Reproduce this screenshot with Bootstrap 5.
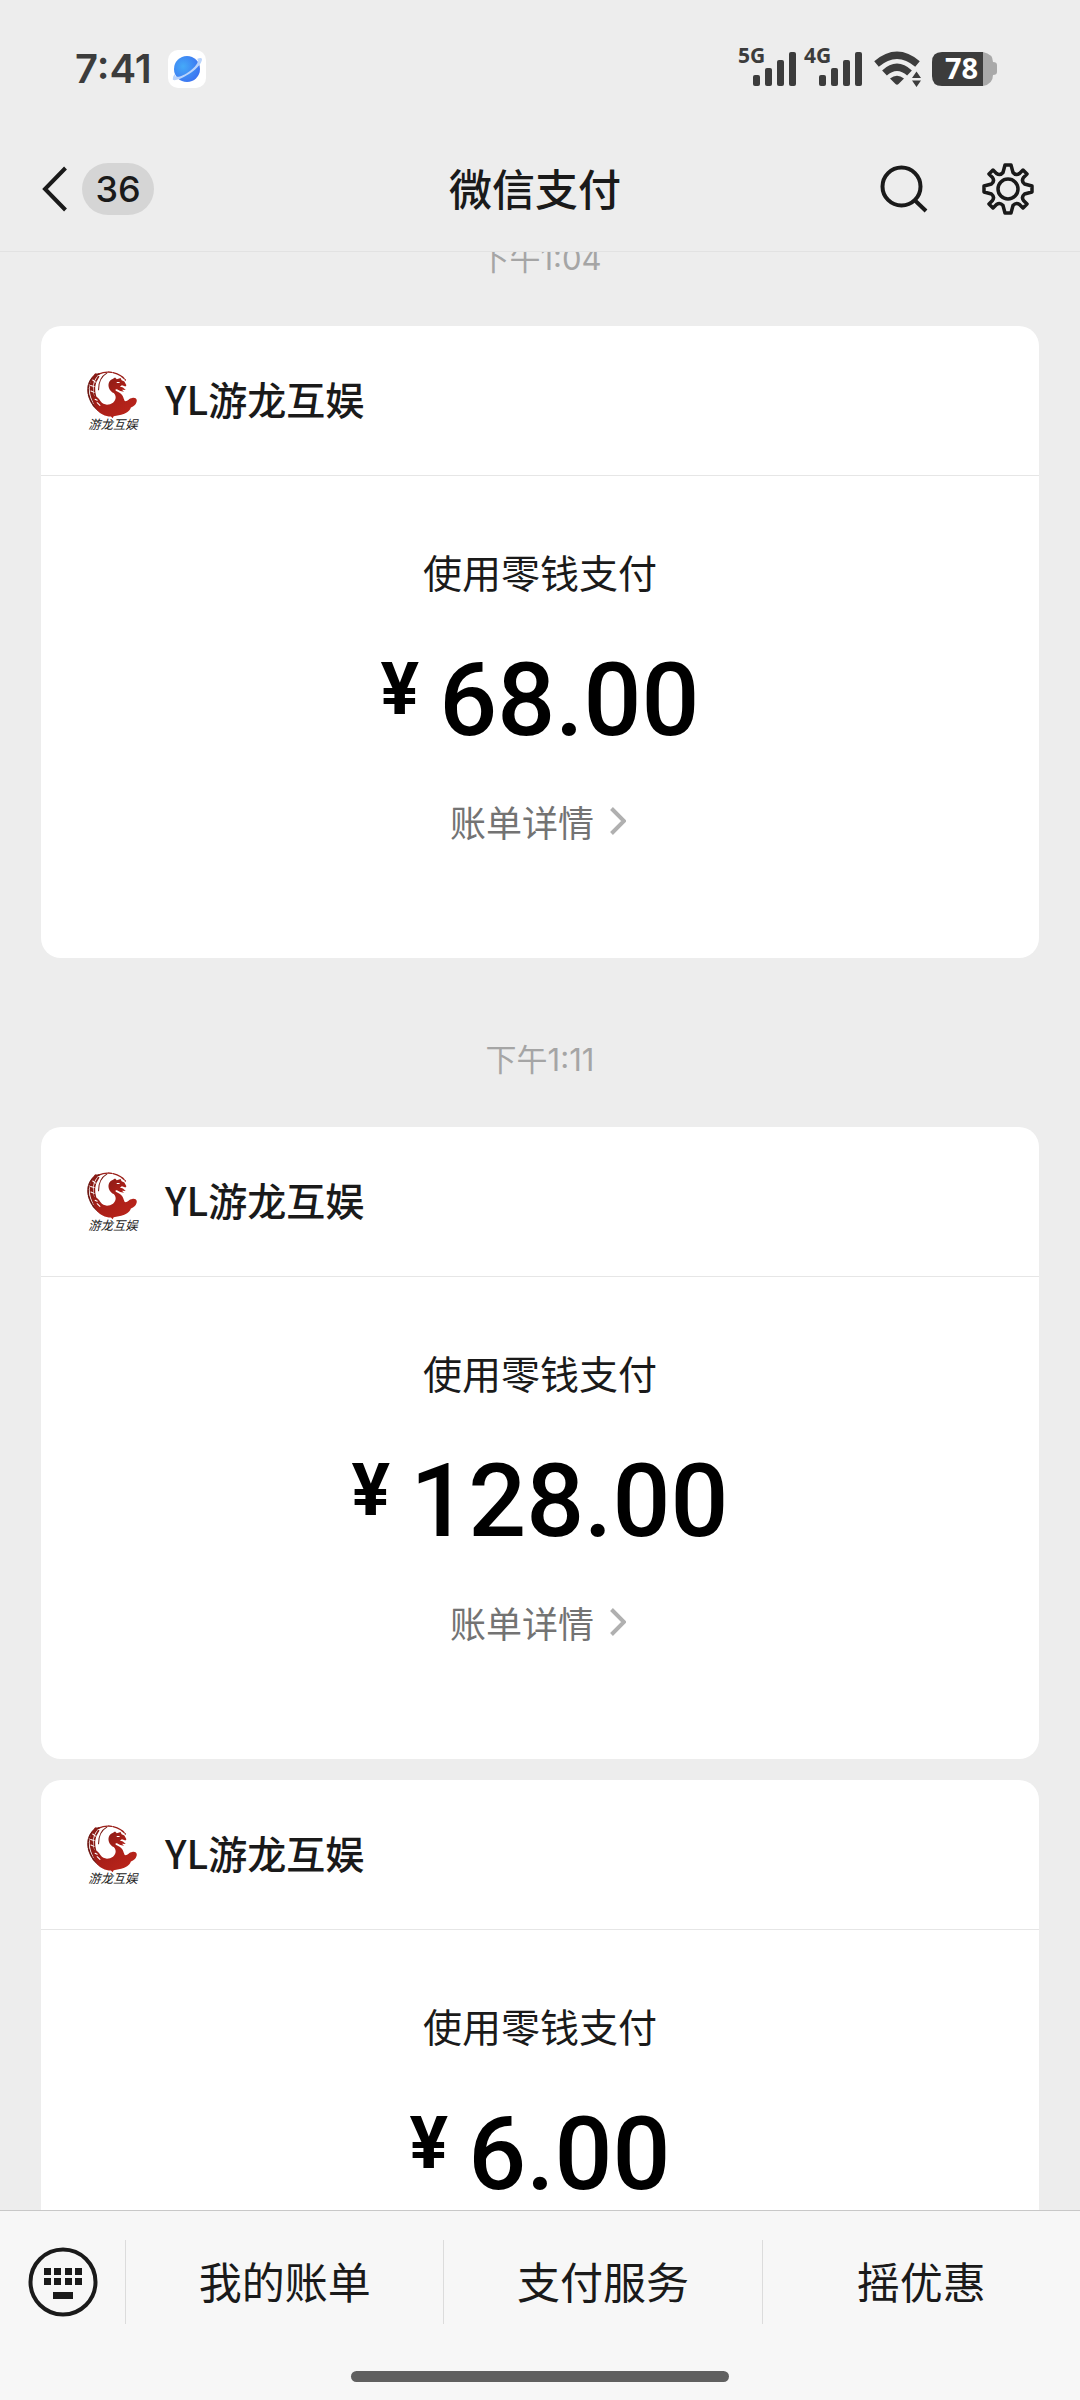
<!DOCTYPE html>
<html lang="zh-CN">
<head>
<meta charset="utf-8">
<meta name="viewport" content="width=device-width, initial-scale=1">
<title>微信支付</title>
<link rel="stylesheet" href="https://cdn.jsdelivr.net/npm/bootstrap@5.3.0/dist/css/bootstrap.min.css">
<style>
  body { background: #ededed; color: #1a1a1a; font-family: "Noto Sans CJK SC", sans-serif; }
  svg { display: block; flex: none; }
  a, button { color: inherit; text-decoration: none; }
  .top-area { border-bottom: 1px solid #e2e2e2; }
  .status-row { height: 138px; padding: 0 82px 0 75px; color: #3c3c3c; }
  .clock { font: 600 40px/48px Inter, sans-serif; }
  .title-row { height: 113px; padding: 0 44px 12px 42px; }
  .title-side { flex: 1 1 0; }
  .back-link { gap: 14px; }
  .unread { width: 72px; height: 52px; background: #d5d5d5; font: 500 36px/52px Inter, sans-serif; }
  .title-text { padding: 0 8px 4px 0; font-size: 43px; line-height: 56px; font-weight: 500; }
  .tools { gap: 50px; }
  .chat-list { margin-top: -95px; padding: 0 41px; }
  .stamp { padding: 80px 0 45px; font: 400 31px/44px Inter, "Noto Sans CJK SC", sans-serif; color: #a5a5a5; }
  .bill { border: 0; border-radius: 20px; overflow: hidden; }
  .bill + .bill { margin-top: 21px; }
  .bill-head { height: 150px; padding: 0 44px; border-bottom: 1px solid #e6e6e6; gap: 24px; }
  .bill-name { padding-bottom: 6px; font-size: 39px; line-height: 48px; font-weight: 500; }
  .bill-body { height: 482px; padding-top: 71px; }
  .pay-way { font-size: 39px; line-height: 48px; }
  .amount { margin-top: 53px; gap: 20px; color: #000; font-family: Roboto, sans-serif; font-weight: 500; }
  .amount-num { font-size: 102px; line-height: 104px; }
  .amount-sign { font-size: 72px; line-height: 84px; font-weight: 700; }
  .detail { margin-top: 45px; padding-right: 4px; gap: 16px; font-size: 36px; line-height: 48px; color: #737373; }
  .bottom-area { background: #f7f7f7; border-top: 1px solid #c8c8c8; }
  .menu-row { height: 84px; margin-top: 29px; }
  .kbd { width: 125px; padding-left: 28px; }
  .menu-item { flex: 1 1 0; padding-bottom: 4px; border-left: 1px solid #dcdcdc; font-size: 43px; line-height: 56px; }
  .home-bar { width: 378px; height: 11px; margin: 47px auto 18px; border-radius: 6px; background: #606060; }
</style>
<script src="https://cdn.jsdelivr.net/npm/bootstrap@5.3.0/dist/js/bootstrap.bundle.min.js"></script>
</head>
<body class="vh-100 d-flex flex-column overflow-hidden">

<svg width="0" height="0" class="position-absolute" aria-hidden="true">
  <defs>
    <linearGradient id="red" x1="0" x2="1" y1="0" y2="1"><stop offset="0" stop-color="#7a1a14"/><stop offset=".45" stop-color="#a81f18"/><stop offset="1" stop-color="#c0261c"/></linearGradient>
    <symbol id="dragon" viewBox="24 28 156 186">
      <g fill="none" stroke-linecap="round">
        <path d="M62 42C36 48 24 78 32 106S58 148 66 152" stroke="#6e1712" stroke-width="5" stroke-dasharray="14 4 8 3"/>
        <path d="M52 46C36 62 34 98 50 124" stroke="#8a1b15" stroke-width="10" stroke-dasharray="22 3 12 4"/>
        <path d="M60 50C48 66 44 88 52 112" stroke="#8a1b15" stroke-width="5"/>
        <path d="M62 42C86 32 118 36 138 60" stroke="#9b201a" stroke-width="4" stroke-dasharray="24 3 10 4"/>
        <path d="M84 40C70 48 60 66 60 88" stroke="#7a1a14" stroke-width="3"/>
      </g>
      <path fill="url(#red)" d="M42 104C54 106 60 112 66 122C74 134 90 134 102 126C112 118 112 106 104 98C94 92 88 84 89 72C91 60 101 58 108 53L113 58L124 54L127 61L135 64L141 75L138 79L128 75L122 79L131 82L139 89L128 88L134 94L123 92L116 88C112 86 108 86 110 91C122 96 132 104 133 114L136 121C144 124 148 112 158 112C172 110 174 120 168 130C164 136 158 138 154 140C150 152 138 158 126 161L104 165L101 171L96 166C80 166 62 158 54 144C45 132 42 118 42 104Z"/>
      <path fill="none" stroke="#fff" stroke-width="3" stroke-linecap="round" d="M38 92l9 4M37 76l10 3M43 60l8 6M56 126l8 8M50 116l6 3M114 67l6 0"/>
      <text x="30" y="203" font-family="Noto Sans CJK SC, sans-serif" font-size="36" font-style="italic" fill="#222">游龙互娱</text>
    </symbol>
    <symbol id="bars" viewBox="0 0 43 34">
      <g fill="#3c3c3c"><rect y="23" width="7" height="11" rx="2"/><rect x="12" y="16" width="7" height="18" rx="2"/><rect x="24" y="8" width="7" height="26" rx="2"/><rect x="36" width="7" height="34" rx="2"/></g>
    </symbol>
    <symbol id="arrow" viewBox="0 0 16 28"><path d="M1.500 1.500L14 14L1.500 26.500" fill="none" stroke="#b0b0b0" stroke-width="4"/></symbol>
  </defs>
</svg>

<header class="top-area">
  <div class="status-row d-flex align-items-center justify-content-between">
    <div class="d-flex align-items-center gap-3">
      <span class="clock">7:41</span>
      <svg width="38" height="38" viewBox="0 0 38 38">
        <defs><radialGradient id="ball" cx=".35" cy=".4" r=".75"><stop offset="0" stop-color="#45aaf8"/><stop offset="1" stop-color="#3a6cf0"/></radialGradient></defs>
        <rect width="38" height="38" rx="10" fill="#fff"/>
        <circle cx="19" cy="19" r="13" fill="url(#ball)"/>
        <path d="M29 9C38 5 34 15 24 22S3 33 5 28C5 26 6 25 7 24C6 29 14 27 22 21S31 10 29 9Z" fill="#b9d3fb"/>
      </svg>
    </div>
    <svg width="262" height="62" viewBox="737 38 262 62">
      <g font-family="Noto Sans, sans-serif" font-weight="700" font-size="21" fill="#3c3c3c">
        <text x="739" y="63">5G</text><text x="805" y="63">4G</text>
      </g>
      <use href="#bars" x="754" y="52" width="43" height="34"/>
      <use href="#bars" x="820" y="52" width="43" height="34"/>
      <g fill="none" stroke="#3c3c3c" stroke-width="7">
        <path d="M877.500 64Q898 46.500 918.500 64"/>
        <path d="M885.500 73Q898 61.500 910.500 73"/>
      </g>
      <path d="M891 78.500Q898 73 905 78.500L899.500 84Q898 85.500 896.500 84Z" fill="#3c3c3c"/>
      <path d="M913 78l4.500-6.500L922 78zM913 80.500h9l-4.500 6.500z" fill="#3c3c3c"/>
      <path d="M984 52q10 2 10 10q4 0 4 3v7q0 3-4 3q0 9-10 11z" fill="#a9a9a9"/>
      <path d="M943 52H984V86H943Q933 86 933 76V62Q933 52 943 52Z" fill="#3c3c3c"/>
      <text x="946" y="79" font-family="Noto Sans, sans-serif" font-weight="700" font-size="29" fill="#fff">78</text>
    </svg>
  </div>
  <div class="title-row d-flex align-items-center">
    <div class="title-side d-flex">
      <a href="#" class="back-link d-flex align-items-center" aria-label="返回">
        <svg width="26" height="46" viewBox="0 0 26 46"><path d="M23.500 2L3 23L23.500 44" fill="none" stroke="#1a1a1a" stroke-width="4"/></svg>
        <span class="unread rounded-pill text-center">36</span>
      </a>
    </div>
    <h1 class="title-text m-0">微信支付</h1>
    <div class="title-side tools d-flex justify-content-end align-items-center">
      <button type="button" class="btn p-0 border-0" aria-label="搜索">
        <svg width="54" height="54" viewBox="876 162 54 54" fill="none" stroke="#1a1a1a" stroke-width="4"><circle cx="901.500" cy="186.500" r="19"/><path d="M914.500 200L926 211"/></svg>
      </button>
      <button type="button" class="btn p-0 border-0" aria-label="设置">
        <svg width="56" height="56" viewBox="-28 -28 56 56" fill="none" stroke="#1a1a1a" stroke-width="3.500" stroke-linejoin="round">
          <circle r="10"/>
          <path d="M-3 -24H3L5 -16.500Q8 -13 11.500 -15.500L15 -19L19 -15L15.500 -11.500Q13 -8 16.500 -5L24 -3V3L16.500 5Q13 8 15.500 11.500L19 15L15 19L11.500 15.500Q8 13 5 16.500L3 24H-3L-5 16.500Q-8 13 -11.500 15.500L-15 19L-19 15L-15.500 11.500Q-13 8 -16.500 5L-24 3V-3L-16.500 -5Q-13 -8 -15.500 -11.500L-19 -15L-15 -19L-11.500 -15.500Q-8 -13 -5 -16.500Z"/>
        </svg>
      </button>
    </div>
  </div>
</header>

<main class="flex-fill overflow-hidden">
  <div class="chat-list">
    <div class="stamp text-center">下午1:04</div>
    <article class="card bill">
      <div class="bill-head d-flex align-items-center">
        <svg width="56" height="64"><use href="#dragon"/></svg>
        <span class="bill-name">YL游龙互娱</span>
      </div>
      <div class="bill-body d-flex flex-column align-items-center">
        <div class="pay-way">使用零钱支付</div>
        <div class="amount d-flex align-items-start"><span class="amount-sign">¥</span><span class="amount-num">68.00</span></div>
        <a href="#" class="detail d-flex align-items-center">账单详情<svg width="16" height="28"><use href="#arrow"/></svg></a>
      </div>
    </article>
    <div class="stamp text-center">下午1:11</div>
    <article class="card bill">
      <div class="bill-head d-flex align-items-center">
        <svg width="56" height="64"><use href="#dragon"/></svg>
        <span class="bill-name">YL游龙互娱</span>
      </div>
      <div class="bill-body d-flex flex-column align-items-center">
        <div class="pay-way">使用零钱支付</div>
        <div class="amount d-flex align-items-start"><span class="amount-sign">¥</span><span class="amount-num">128.00</span></div>
        <a href="#" class="detail d-flex align-items-center">账单详情<svg width="16" height="28"><use href="#arrow"/></svg></a>
      </div>
    </article>
    <article class="card bill">
      <div class="bill-head d-flex align-items-center">
        <svg width="56" height="64"><use href="#dragon"/></svg>
        <span class="bill-name">YL游龙互娱</span>
      </div>
      <div class="bill-body d-flex flex-column align-items-center">
        <div class="pay-way">使用零钱支付</div>
        <div class="amount d-flex align-items-start"><span class="amount-sign">¥</span><span class="amount-num">6.00</span></div>
      </div>
    </article>
  </div>
</main>

<footer class="bottom-area">
  <nav class="menu-row d-flex align-items-stretch">
    <button type="button" class="kbd btn border-0 rounded-0 py-0 pe-0 d-flex align-items-center" aria-label="键盘">
      <svg width="70" height="70" viewBox="0 0 70 70">
        <circle cx="35" cy="35" r="32.500" fill="none" stroke="#1a1a1a" stroke-width="4"/>
        <path fill="#1a1a1a" d="M16 21h7v7h-7zM26 21h7v7h-7zM37 21h7v7h-7zM47 21h7v7h-7zM16 31h7v7h-7zM26 31h7v7h-7zM37 31h7v7h-7zM47 31h7v7h-7zM25 45h20v7h-20z"/>
      </svg>
    </button>
    <a href="#" class="menu-item d-flex align-items-center justify-content-center">我的账单</a>
    <a href="#" class="menu-item d-flex align-items-center justify-content-center">支付服务</a>
    <a href="#" class="menu-item d-flex align-items-center justify-content-center">摇优惠</a>
  </nav>
  <div class="home-bar"></div>
</footer>
</body>
</html>
